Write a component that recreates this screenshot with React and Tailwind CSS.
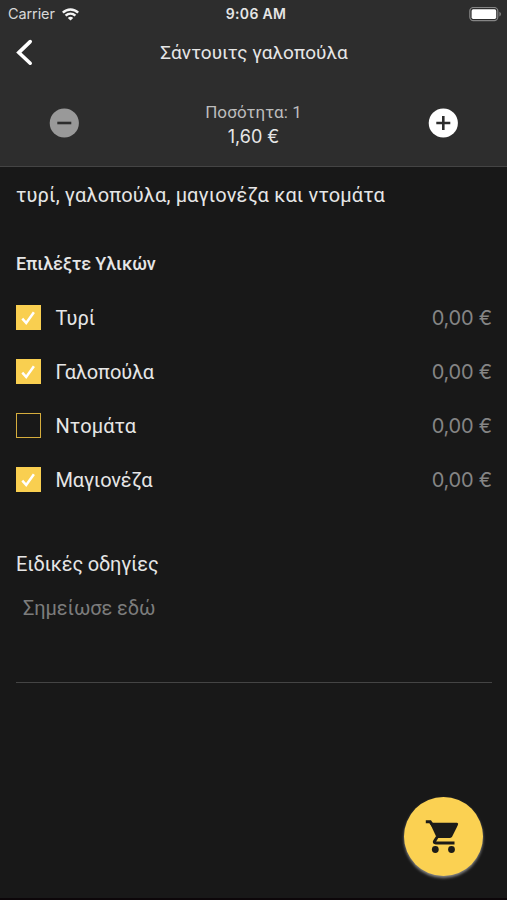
const INGREDIENTS = [
  { name: 'Τυρί', checked: true, track: 'tracking-[0px]' },
  { name: 'Γαλοπούλα', checked: true, track: 'tracking-[-0.15px]' },
  { name: 'Ντομάτα', checked: false, track: 'tracking-[0.1px]' },
  { name: 'Μαγιονέζα', checked: true, track: 'tracking-[-0.15px]' },
];

function Wifi() {
  return (
    <svg className="ml-[7px] h-[13px] w-[17px]" viewBox="0 0 17 13" fill="none" stroke="#f4f4f4" strokeWidth="2.5">
      <path d="M0.8 4.6C5.2 0.3 11.8 0.3 16.2 4.6" />
      <path d="M3.6 7.7C6.5 5 10.5 5 13.4 7.7" />
      <path d="M8.5 12.6L5.8 9.9C7.3 8.5 9.7 8.5 11.2 9.9Z" fill="#f4f4f4" stroke="none" />
    </svg>
  );
}

function Battery() {
  return (
    <svg className="h-[15px] w-[33px]" viewBox="0 0 33 15">
      <rect x="0.8" y="0.5" width="28" height="13.2" rx="3.6" fill="none" stroke="#858585" strokeWidth="1.2" />
      <rect x="2.6" y="2.3" width="24.6" height="9.6" rx="1.6" fill="#fff" />
      <path d="M30.4 4.8C32.4 5.6 32.4 8.6 30.4 9.4Z" fill="#858585" />
    </svg>
  );
}

function RoundButton({ plus }) {
  return (
    <svg className="size-[30px]" viewBox="0 0 30 30">
      <circle cx="15.3" cy="15" r="14.6" fill={plus ? '#fff' : '#999'} />
      <path d={plus ? 'M8.3 15H22.3M15.3 8V22' : 'M8.3 15H22.3'} stroke="#2d2d2d" strokeWidth="2.6" />
    </svg>
  );
}

function Checkbox({ checked }) {
  return (
    <span className={`-ml-[0.5px] flex size-[25px] items-center justify-center border ${checked ? 'border-[#f9cf50] bg-[#f9cf50]' : 'border-[#d5ad3d]'}`}>
      {checked && (
        <svg className="size-[23px] shrink-0" viewBox="0 0 23 23" fill="none" stroke="#fff" strokeWidth="2.5">
          <path d="M5.3 12.6L9.2 17L16.9 6.3" />
        </svg>
      )}
    </span>
  );
}

export default function App() {
  return (
    <div className="relative flex h-[900px] w-[507px] flex-col overflow-hidden bg-[#181818] font-['Roboto','Inter',sans-serif] text-[#e6e6e6]">
      <header className="h-[167px] border-b border-[#444] bg-[#2d2d2d]">
        <div className="grid h-[28px] grid-cols-3 items-center pl-[10px] pr-[5px] font-['Inter',sans-serif]">
          <div className="-ml-[2px] flex items-center">
            <span className="text-[14.5px] leading-[18px] tracking-[-0.1px] text-[#d8d8d8]">Carrier</span>
            <Wifi />
          </div>
          <span className="text-center text-[14px] font-semibold leading-[18px] tracking-[0.3px] whitespace-nowrap">9:06 AM</span>
          <div className="flex justify-end"><Battery /></div>
        </div>
        <div className="grid h-[50px] grid-cols-[60px_1fr_60px] items-center">
          <svg className="ml-[15px] h-[28px] w-[20px]" viewBox="0 0 20 28" fill="none" stroke="#fff" strokeWidth="3.6" strokeLinecap="round" strokeLinejoin="miter">
            <path d="M15.2 2.6L3.8 13.6L15.2 24.2" />
          </svg>
          <h1 className="pl-[1px] text-center text-[19px] leading-[24px] whitespace-nowrap">Σάντουιτς γαλοπούλα</h1>
        </div>
        <div className="flex h-[90px] items-center justify-between px-[49px]">
          <RoundButton />
          <div className="pt-[3px] text-center">
            <p className="text-[17px] leading-[23px] tracking-[0.1px] text-[#bdbdbd]">Ποσότητα: 1</p>
            <p className="pt-[1px] font-['Inter',sans-serif] text-[18px] leading-[24px]">1,60 €</p>
          </div>
          <RoundButton plus />
        </div>
      </header>
      <main className="pl-[16px] pr-[15px]">
        <p className="pt-[15px] text-[20px] leading-[26px] tracking-[0.13px] whitespace-nowrap">τυρί, γαλοπούλα, μαγιονέζα και ντομάτα</p>
        <h2 className="pt-[44px] text-[18px] font-medium leading-[24px] tracking-[-0.1px]">Επιλέξτε Υλικών</h2>
        <ul className="pt-[14px]">
          {INGREDIENTS.map((item) => (
            <li key={item.name} className="flex h-[54.2px] items-center">
              <Checkbox checked={item.checked} />
              <span className={`ml-[15px] pt-[1px] text-[20px] leading-[26px] ${item.track}`}>{item.name}</span>
              <span className="ml-auto pt-[1px] font-['Inter',sans-serif] text-[20px] leading-[26px] tracking-[-0.2px] text-[#858585]">0,00 €</span>
            </li>
          ))}
        </ul>
        <h2 className="pt-[44px] text-[20px] leading-[26px] tracking-[-0.2px]">Ειδικές οδηγίες</h2>
        <div className="h-[106px] border-b border-[#444] pl-[7px] pt-[18px] text-[20px] leading-[26px] tracking-[-0.1px] text-[#7c7c7c]">Σημείωσε εδώ</div>
      </main>
      <button className="absolute left-[404px] top-[797px] flex size-[79px] items-center justify-center rounded-full bg-[#fbd152] shadow-[0_2px_3px_#888]">
        <svg className="size-[79px]" viewBox="0 0 79 79">
          <path d="M21.8 24.8H26.2L29.5 29.5" fill="none" stroke="#1c1b18" strokeWidth="3" />
          <path d="M26 25.8H53Q54.8 26 53.9 28L48.2 39.6Q47.5 40.9 46 40.9H32.8L26 26.3Z" fill="#1c1b18" />
          <path d="M33.2 40L30.6 44.1Q29.5 46 31.8 46H50.5" fill="none" stroke="#1c1b18" strokeWidth="2.9" />
          <circle cx="31.3" cy="52.5" r="3.4" fill="#1c1b18" />
          <circle cx="47.5" cy="52.5" r="3.4" fill="#1c1b18" />
        </svg>
      </button>
      <div className="mt-auto h-[2px] bg-[#0c0609]" />
    </div>
  );
}
